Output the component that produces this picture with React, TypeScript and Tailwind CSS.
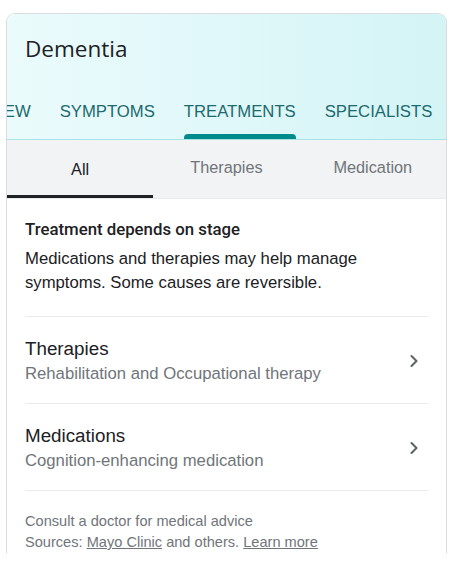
import { ChevronRight } from "lucide-react";

const TOP_TABS = ["OVERVIEW", "SYMPTOMS", "TREATMENTS", "SPECIALISTS"];
const SUB_TABS = ["All", "Therapies", "Medication"];

const ROWS = [
  { title: "Therapies", sub: "Rehabilitation and Occupational therapy" },
  { title: "Medications", sub: "Cognition-enhancing medication" },
];

export default function App() {
  return (
    <div className="min-h-[572px] bg-white pl-[6px] pr-[10px] pt-[13px] font-['Liberation_Sans',Arial,sans-serif]">
      <div className="overflow-hidden rounded-t-[9px] border border-b-0 border-[#dadce0]">
        <div className="bg-gradient-to-r from-[#ebfbfc] to-[#d4f4f6]">
          <h1 className="px-[18px] pt-[20px] font-['Open_Sans',sans-serif] text-[22.5px] leading-[30px] text-[#202124]">
            Dementia
          </h1>
          <div className="mt-[28px] flex h-[48px] items-end overflow-hidden border-b border-[#a6e3e6]">
            <div className="flex shrink-0 -translate-x-[66px] gap-[29px] text-[16.7px] text-[#1b6a6d]">
              {TOP_TABS.map((t) => (
                <div key={t} className="relative flex h-[48px] flex-col items-center">
                  <span className="pt-[11px] leading-[20px]">{t}</span>
                  {t === "TREATMENTS" && (
                    <div className="absolute bottom-0 left-0 right-0 h-[5px] rounded-t-[4px] bg-[#008a8b]" />
                  )}
                </div>
              ))}
            </div>
          </div>
        </div>

        <div className="grid h-[59px] grid-cols-3 border-b border-[#e8eaed] bg-[#f1f3f4] text-[16.3px]">
          {SUB_TABS.map((t, i) => (
            <div
              key={t}
              className={
                i === 0
                  ? "flex items-center justify-center border-b-[3px] border-[#202124] pt-[3px] text-[#202124]"
                  : "flex items-center justify-center pb-[3px] text-[#70757a]"
              }
            >
              {t}
            </div>
          ))}
        </div>

        <div className="px-[18px]">
          <div className="border-b border-[#ebebeb] pb-[21px] pt-[19px]">
            <div className="font-['Roboto',sans-serif] text-[16.8px] font-medium leading-[22px] text-[#202124]">
              Treatment depends on stage
            </div>
            <p className="mt-[7px] pr-[50px] text-[16.7px] leading-[24px] text-[#202124]">
              Medications and therapies may help manage symptoms. Some causes are reversible.
            </p>
          </div>

          {ROWS.map((r) => (
            <div
              key={r.title}
              className="flex items-center justify-between border-b border-[#ebebeb] pb-[17px] pt-[19px]"
            >
              <div>
                <div className="text-[18.8px] leading-[26px] text-[#202124]">{r.title}</div>
                <div className="text-[16.7px] leading-[24px] text-[#70757a]">{r.sub}</div>
              </div>
              <ChevronRight className="mr-[4px] h-[20px] w-[20px] text-[#5f6368]" strokeWidth={2.5} />
            </div>
          ))}

          <div className="pt-[20px] text-[14.6px] leading-[21px] text-[#70757a]">
            <div>Consult a doctor for medical advice</div>
            <div>
              Sources: <span className="underline">Mayo Clinic</span> and others.{" "}
              <span className="underline">Learn more</span>
            </div>
          </div>
        </div>
      </div>
    </div>
  );
}
